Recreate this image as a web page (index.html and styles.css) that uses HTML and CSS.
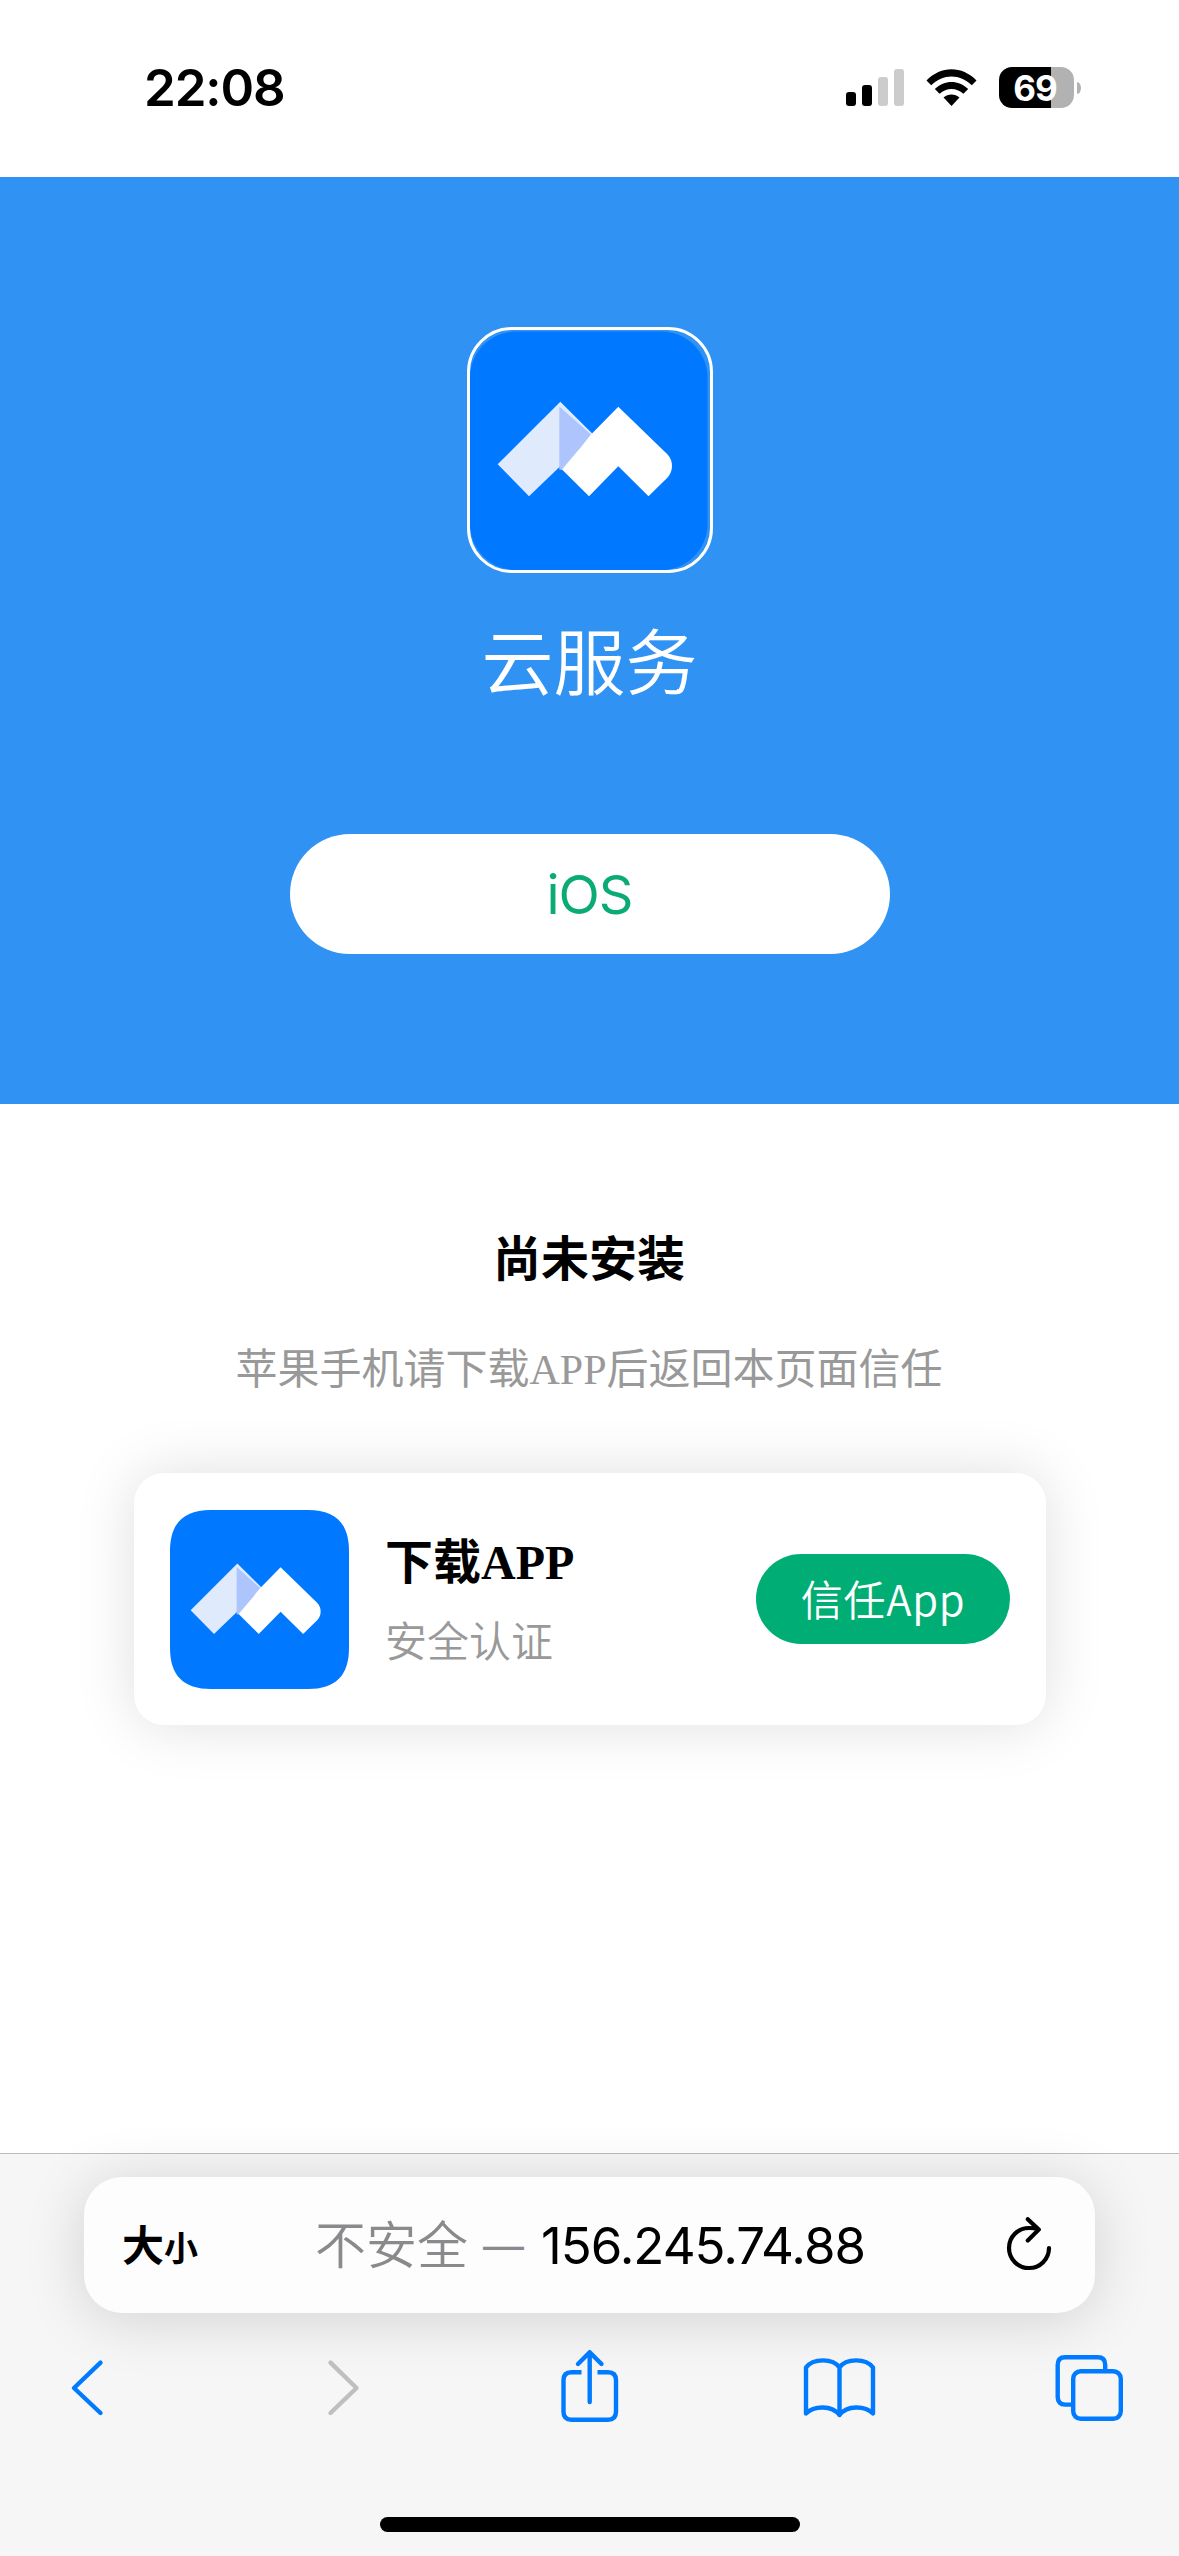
FILE: index.html
```
<!DOCTYPE html>
<html lang="zh-CN">
<head>
<meta charset="utf-8">
<title>云服务</title>
<link rel="stylesheet" href="styles.css">
</head>
<body>
<svg class="defs" aria-hidden="true">
  <symbol id="logo" viewBox="0 0 240 240">
    <path fill="#dfeafd" d="M27.7 134.3 90.3 71.7 123 104.3 90 136.5 59 166.2Z"/>
    <path fill="#adc4fc" d="M89.3 76.5 121 104.5 92.3 140 89.3 139.5Z"/>
    <path fill="#fff" d="M148.3 76.8 197.6 124.6Q202 129.500 202 136T197.600 147.400L178.500 166.200 148.300 136.300 119 166.200 92 139.500 122 103.500Z"/>
  </symbol>
</svg>
<div class="phone">
  <header class="status">
    <span class="time">22:08</span>
    <div class="indicators">
      <svg class="signal" width="58" height="37" viewBox="0 0 58 37">
        <rect y="23" width="10" height="14" rx="3"/>
        <rect x="16" y="16" width="10" height="21" rx="3"/>
        <rect class="off" x="32" y="8" width="10" height="29" rx="3"/>
        <rect class="off" x="48" width="10" height="37" rx="3"/>
      </svg>
      <svg class="wifi" width="51" height="38" viewBox="0 0 51 38">
        <path d="M0.500 11.500C15 -3.500 36 -3.500 50.500 11.500L45.800 16.300C34 4.700 17 4.700 5.200 16.300Z"/>
        <path d="M8.800 20C18.500 10.600 32.500 10.600 42.200 20L37.400 24.800C30.500 18.300 20.500 18.300 13.600 24.800Z"/>
        <path d="M17.500 28.600C22 24.500 29 24.500 33.500 28.600L25.500 37Z"/>
      </svg>
      <div class="battery"><div class="cell"><span>69</span></div><i class="nub"></i></div>
    </div>
  </header>

  <section class="hero">
    <div class="app-icon">
      <svg width="240" height="240" viewBox="0 0 240 240">
        <rect y="1.500" width="237.500" height="238.500" rx="46" fill="#0078ff"/>
        <use href="#logo" width="240" height="240"/>
      </svg>
    </div>
    <h1 class="app-name">云服务</h1>
    <a class="platform">iOS</a>
  </section>

  <main class="content">
    <h2 class="state">尚未安装</h2>
    <p class="hint">苹果手机请下载APP后返回本页面信任</p>
    <div class="card">
      <svg class="card-icon" width="179" height="179" viewBox="0 0 240 240">
        <path fill="#0078ff" d="M0 55C0 18 18 0 55 0H185C222 0 240 18 240 55V185C240 222 222 240 185 240H55C18 240 0 222 0 185Z"/>
        <use href="#logo" width="240" height="240"/>
      </svg>
      <div class="card-text">
        <strong class="card-title">下载APP</strong>
        <span class="card-sub">安全认证</span>
      </div>
      <a class="trust">信任App</a>
    </div>
  </main>

  <footer class="browser">
    <div class="address">
      <span class="sizer">大<small>小</small></span>
      <span class="url"><span class="insecure">不安全</span><span class="dash">—</span><span class="host">156.245.74.88</span></span>
      <svg class="reload" width="46" height="56" viewBox="0 0 46 56">
        <path d="M43 31A20 20 0 1 1 23 11Q28 11 32.500 12.300M21.800 2.200 32.800 12.600 21.800 23.500"/>
      </svg>
    </div>
    <nav class="tools">
      <svg width="80" height="80" viewBox="0 0 80 80"><path d="M53.500 15.700 27 41 53.500 66"/></svg>
      <svg class="disabled" width="80" height="80" viewBox="0 0 80 80"><path d="M32.500 15.700 58.500 41 32.500 66"/></svg>
      <svg width="80" height="80" viewBox="0 0 80 80">
        <path stroke-linecap="butt" d="M31.500 25.300H21.500Q13.500 25.300 13.500 33.300V64.800Q13.500 72.800 21.500 72.800H58Q66 72.800 66 64.800V33.300Q66 25.300 58 25.300H47.500"/>
        <path d="M39.700 55V6M28 17 39.700 5.200 51.500 17"/>
      </svg>
      <svg width="80" height="80" viewBox="0 0 80 80"><path d="M38.500 20.500C32 11 12 11 5 20.500V66.500C13 58.500 31 58 38.500 68C46 58 64 58.500 72 66.500V20.500C65 11 45 11 38.500 20.500ZM38.500 20.500V68"/></svg>
      <svg width="80" height="80" viewBox="0 0 80 80"><rect x="20.200" y="24.200" width="47.600" height="47.600" rx="7.500"/><path stroke-linecap="butt" d="M20 57.600H12.200Q4.700 57.600 4.700 50.100V17.700Q4.700 10.200 12.200 10.200H44.700Q52.200 10.200 52.200 17.700V24"/></svg>
    </nav>
    <div class="home"></div>
  </footer>
</div>
</body>
</html>
```
FILE: styles.css
```
* { box-sizing: border-box; }

body {
  margin: 0;
  background: #fff;
  font-family: Inter, "Noto Sans CJK SC", sans-serif;
}

h1, h2, p { margin: 0; }
svg { display: block; flex: none; }
.defs { display: none; }

.phone {
  width: 1179px;
  height: 2556px;
  display: flex;
  flex-direction: column;
  overflow: hidden;
}

/* Status bar */
.status {
  height: 177px;
  padding: 57px 98px 0 144px;
  display: flex;
  justify-content: space-between;
  align-items: flex-start;
}
.time {
  font-size: 51px;
  line-height: 62px;
  font-weight: 600;
  letter-spacing: -1.1px;
}
.indicators {
  height: 41px;
  margin-top: 10px;
  display: flex;
  align-items: center;
}
.signal .off { fill: #ccc; }
.wifi { margin: 0 22px; }
.battery { display: flex; align-items: center; gap: 3px; }
.cell {
  width: 75px;
  height: 41px;
  padding-right: 3px;
  border-radius: 13px;
  background: linear-gradient(90deg, #000 52px, #b2b2b2 52px);
  color: #fff;
  font-size: 35px;
  font-weight: 700;
  line-height: 42px;
  text-align: center;
  letter-spacing: -1px;
}
.nub {
  width: 4px;
  height: 12px;
  border-radius: 0 4px 4px 0 / 0 6px 6px 0;
  background: #b2b2b2;
}

/* Hero */
.hero {
  height: 927px;
  padding-top: 150px;
  background: #3092f2;
  display: flex;
  flex-direction: column;
  align-items: center;
}
.app-icon {
  width: 246px;
  height: 246px;
  border: 3px solid #fff;
  border-radius: 45px;
  overflow: hidden;
}
.app-name {
  margin-top: 38px;
  color: #fff;
  font-size: 72px;
  line-height: 104px;
  font-weight: 350;
}
.platform {
  width: 600px;
  height: 120px;
  margin-top: 119px;
  border-radius: 60px;
  background: #fff;
  color: #0bab74;
  font-size: 54px;
  line-height: 122px;
  text-align: center;
  letter-spacing: -1px;
}

/* Page content */
.content {
  height: 1049px;
  padding: 121px 133px 0 134px;
  font-family: "Liberation Serif", "Noto Sans CJK SC", serif;
  display: flex;
  flex-direction: column;
}
.state {
  padding-right: 2px;
  font-size: 48px;
  line-height: 70px;
  font-weight: 700;
  text-align: center;
}
.hint {
  margin-top: 45px;
  padding-right: 2px;
  color: #999;
  font-size: 42px;
  line-height: 60px;
  text-align: center;
}
.card {
  height: 252px;
  margin-top: 73px;
  padding: 0 36px;
  border-radius: 30px;
  box-shadow: 0 0 60px rgba(0, 0, 0, .13);
  display: flex;
  align-items: center;
}
.card-text {
  margin-left: 36px;
  padding-top: 2px;
  flex: 1;
  display: flex;
  flex-direction: column;
  gap: 15px;
}
.card-title { font-size: 48px; line-height: 70px; }
.card-sub { color: #999; font-size: 42px; line-height: 60px; font-weight: 350; }
.trust {
  width: 254px;
  height: 90px;
  border-radius: 45px;
  background: #00ae75;
  color: #fff;
  font-family: "Noto Sans CJK SC", sans-serif;
  font-size: 42px;
  line-height: 87px;
  font-weight: 350;
  text-align: center;
  letter-spacing: .7px;
}

/* Browser bar */
.browser {
  height: 403px;
  padding: 23px 84px 0;
  border-top: 1px solid #bcbcbf;
  background: #f6f6f6;
}
.address {
  height: 136px;
  padding: 0 43px 0 38px;
  border-radius: 38px;
  background: #fdfdfd;
  box-shadow: 0 6px 60px rgba(0, 0, 0, .15);
  display: flex;
  align-items: center;
}
.sizer {
  width: 193px;
  padding-top: 5px;
  font-size: 42px;
  line-height: 60px;
  font-weight: 600;
}
.sizer small { font-size: 34px; }
.url {
  display: flex;
  padding-top: 2px;
  font-size: 51px;
  line-height: 74px;
  color: #8a8a8d;
}
.insecure { font-weight: 350; }
.dash {
  width: 41px;
  margin: 0 17px 0 15px;
  display: flex;
  justify-content: center;
  font-size: 41px;
}
.host { color: #000; letter-spacing: -1px; }
.reload {
  margin-left: auto;
  fill: none;
  stroke: #000;
  stroke-width: 4.200;
  stroke-linecap: round;
  stroke-linejoin: round;
}
.tools {
  margin: 34px -37.500px 0;
  display: flex;
  justify-content: space-between;
  fill: none;
  stroke: #007aff;
  stroke-width: 4.400;
  stroke-linecap: round;
  stroke-linejoin: round;
}
.tools .disabled { stroke: #bfbfbf; }
.home {
  width: 420px;
  height: 15px;
  margin: 90px auto 0;
  border-radius: 8px;
  background: #000;
}
```
